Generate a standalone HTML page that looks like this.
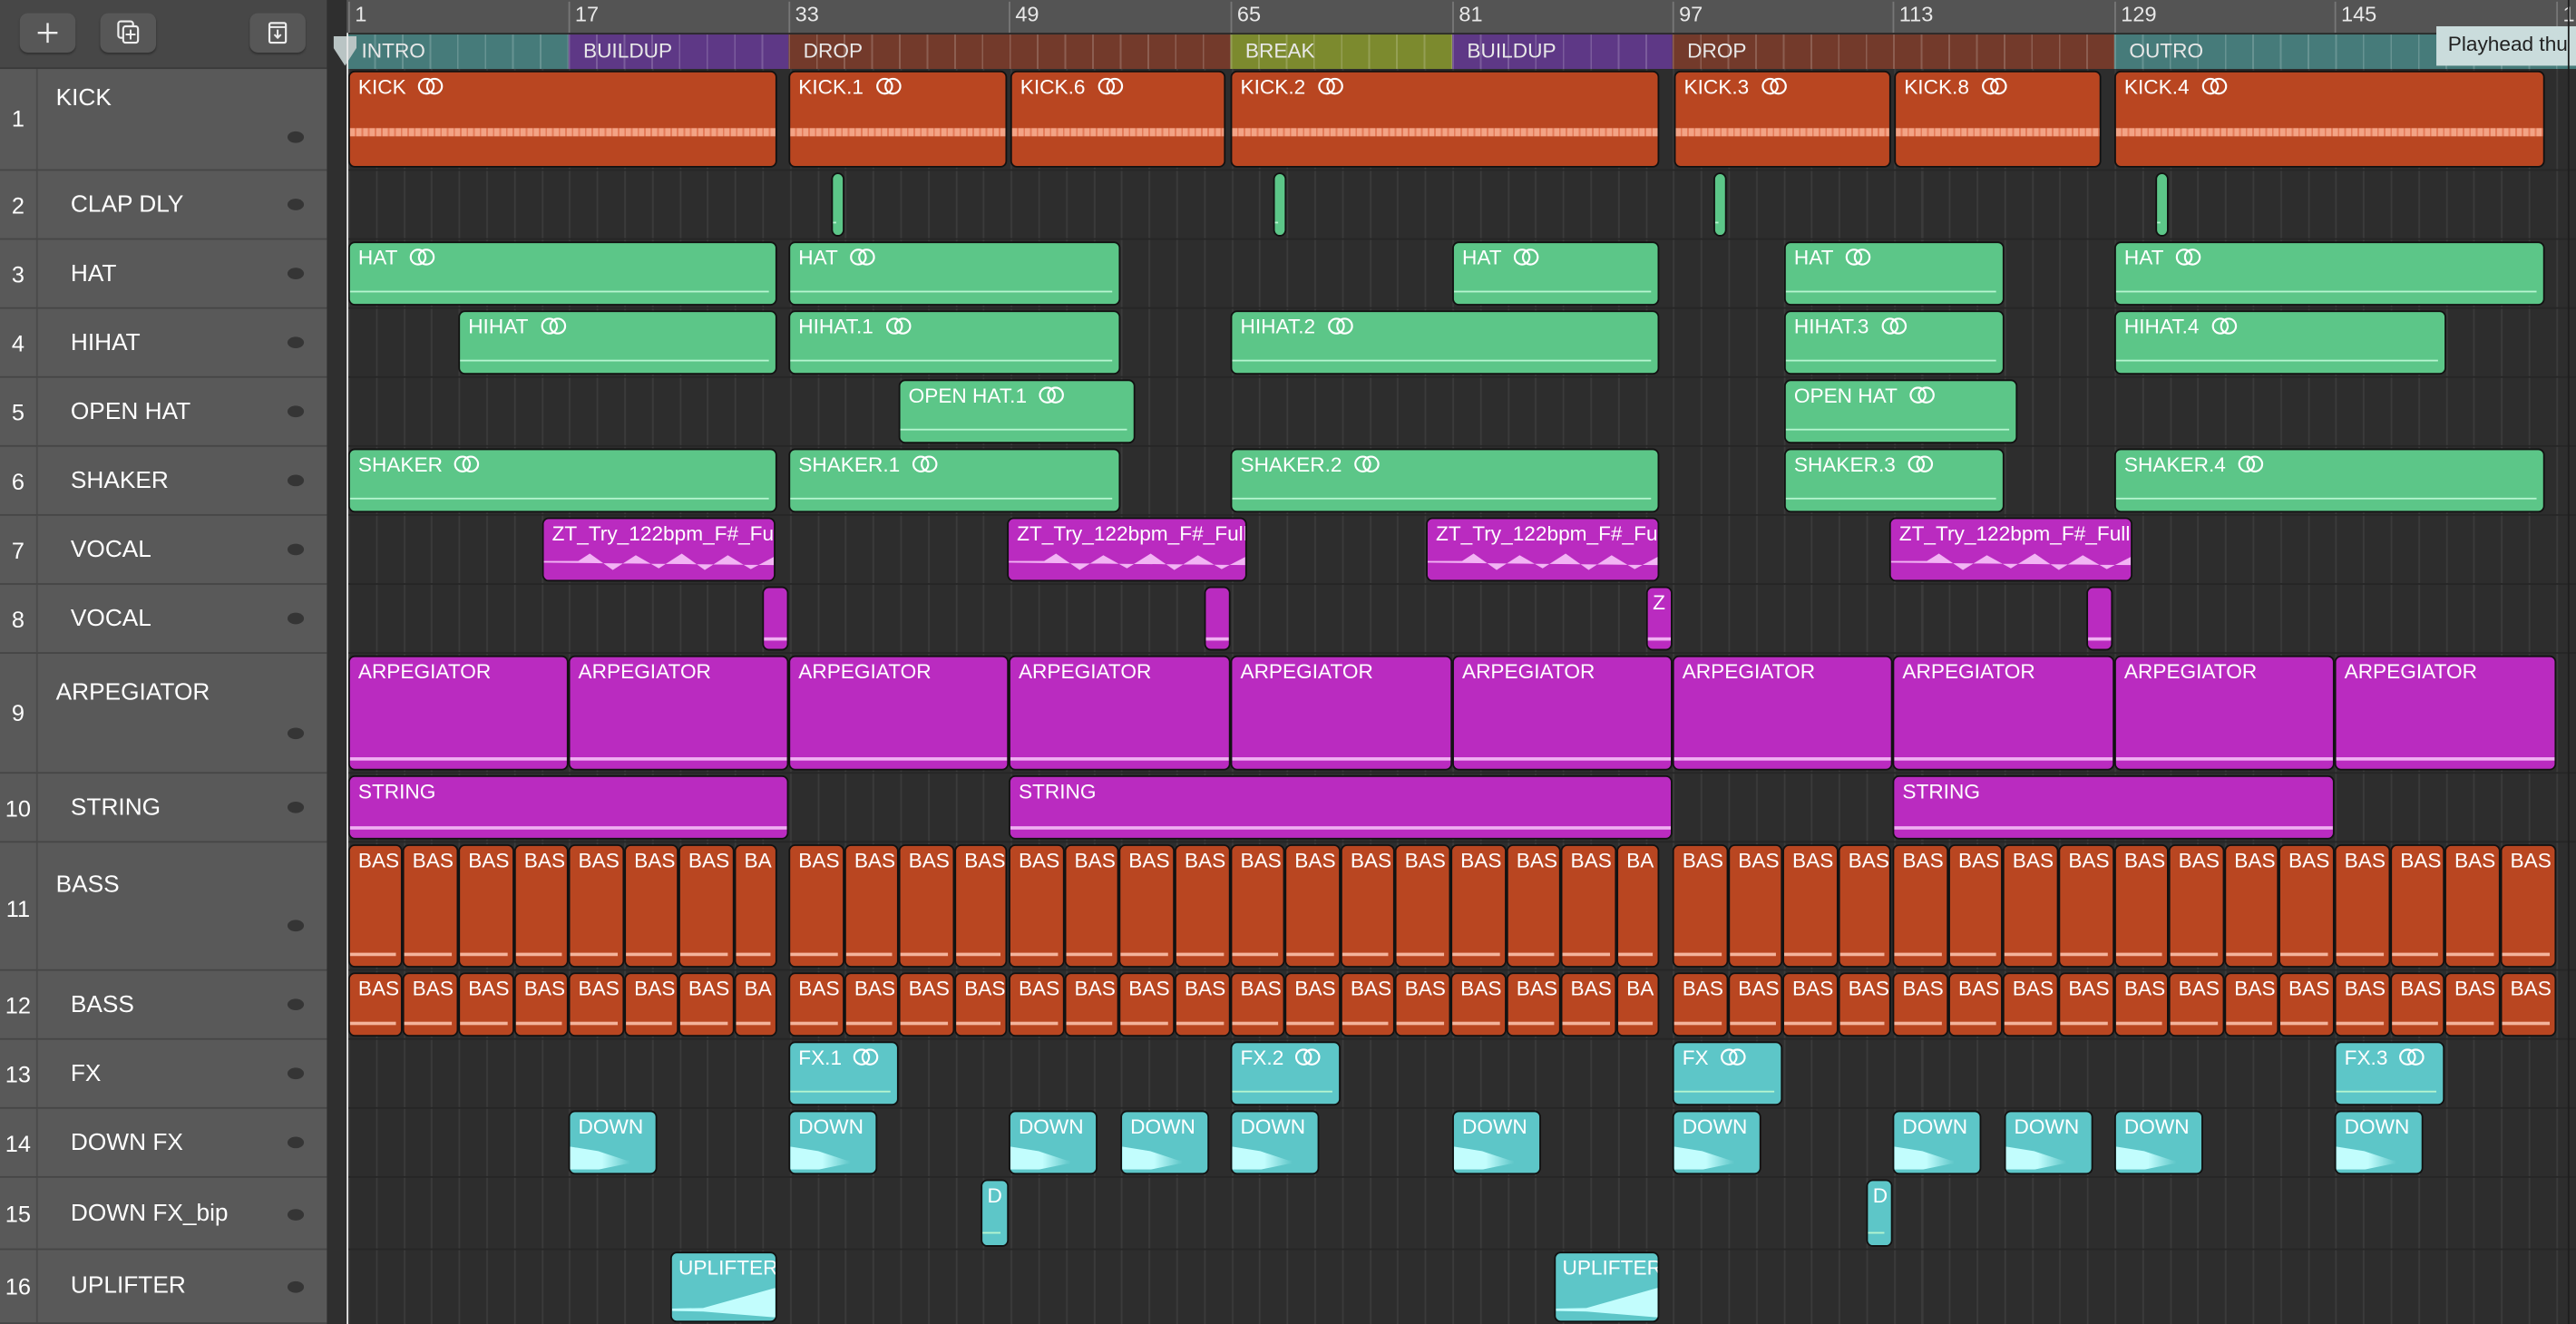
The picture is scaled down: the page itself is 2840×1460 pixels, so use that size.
<!DOCTYPE html>
<html><head><meta charset="utf-8"><style>
*{margin:0;padding:0;box-sizing:border-box}
html,body{width:2840px;height:1460px;overflow:hidden;background:#2d2d2d}
#s{position:absolute;left:0;top:0;width:1568px;height:806px;transform:scale(1.81122,1.81141);transform-origin:0 0;font-family:"Liberation Sans",sans-serif;background:#2d2d2d;overflow:hidden}
.hdr{position:absolute;left:0;top:0;width:199px;height:42px;background:#474747;border-bottom:1px solid #3a3a3a}
.btn{position:absolute;top:8px;height:24px;width:34px;background:#575757;border-radius:5px;box-shadow:0 1px 1px #333}
.panel{position:absolute;left:0;top:42px;width:199px;height:764px;background:#595959}
.strip{position:absolute;left:199px;top:0;width:12px;height:806px;background:#2f2f2f}
.tr{position:absolute;left:0;width:199px;border-bottom:1.5px solid #464646;color:#fff;font-size:14.5px}
.tr .n{position:absolute;left:0;width:23px;text-align:center;font-size:14px;border-right:1.5px solid #4a4a4a;height:100%}
.tr .nm{position:absolute;left:43px}
.tr .d{position:absolute;left:175px;width:10px;height:7px;border-radius:50%;background:#353535}
.arr{position:absolute;left:211px;top:42px;width:1357px;height:764px;background:#2d2d2d repeating-linear-gradient(90deg,#3b3b3b 0 1px,transparent 1px 16.8px);background-position:1px 0}
.ruler{position:absolute;left:211px;top:0;width:1357px;height:20px;background:#545454;color:#e8e8e8;font-size:13px}
.ruler span{position:absolute;top:1px;padding-left:3px;border-left:1px solid #777;height:19px}
.mk{position:absolute;top:20px;height:22px;color:#e8e8e8;font-size:12.5px;padding:3px 0 0 9px;border-top:1px solid #2a2a2a;background-image:repeating-linear-gradient(90deg,rgba(255,255,255,.18) 0 1px,transparent 1px 16.8px)}
.lane{position:absolute;left:0;width:1357px;border-bottom:1px solid #262626}
.r{position:absolute;top:1px;bottom:1px;border:1.2px solid #111;border-radius:4px;color:#fff;font-size:12.5px;padding:2px 0 0 5px;white-space:nowrap;overflow:hidden}
.o{background:#b94621}.g{background:#5cc688}.m{background:#ba2bc0}.c{background:#5dc6c8}
.o.k::after{content:"";position:absolute;left:0;right:0;top:60%;height:5px;background:repeating-linear-gradient(90deg,#f3a385 0 3px,#e57a58 3px 4px)}
.g::after,.c.l::after{content:"";position:absolute;left:0;right:4px;bottom:7px;height:1px;background:#b6f5d0}
.m.a::after{content:"";position:absolute;left:0;right:0;bottom:5px;height:2px;background:#f0b0f2}
.o.b::after{content:"";position:absolute;left:0;right:3px;bottom:6px;height:2px;background:#f4b49c}
.c.w::after{content:"";position:absolute;left:0;right:3px;bottom:2px;height:14px;background:linear-gradient(to right,#c2fdfd 0,#c2fdfd 40%,transparent 75%);clip-path:polygon(0 0,35% 20%,70% 60%,100% 62%,100% 72%,70% 75%,35% 100%,0 100%)}
.c.u::after{content:"";position:absolute;left:0;right:0;bottom:2px;height:18px;background:#c2fdfd;clip-path:polygon(0 70%,30% 68%,100% 0,100% 100%,30% 80%,0 78%)}
.m.v::after{content:"";position:absolute;left:0;right:0;bottom:6px;height:10px;background:#f2b4f4;clip-path:polygon(0 45%,15% 45%,20% 0,30% 100%,40% 10%,50% 90%,60% 0,70% 100%,80% 10%,90% 95%,100% 20%,100% 70%,0 55%)}
.lp{display:inline-block;vertical-align:-1px;margin-left:7px}
</style></head><body><div id="s">
<div class="hdr">
<div class="btn" style="left:12px"><svg width="34" height="24"><path d="M17 6v12M11 12h12" stroke="#eee" stroke-width="1.3"/></svg></div>
<div class="btn" style="left:61px"><svg width="34" height="24"><rect x="11" y="5" width="9" height="10" rx="1.5" fill="none" stroke="#eee" stroke-width="1.2"/><rect x="14" y="8" width="9" height="10" rx="1.5" fill="#575757" stroke="#eee" stroke-width="1.2"/><path d="M18.5 10v6M15.5 13h6" stroke="#eee" stroke-width="1.1"/></svg></div>
<div class="btn" style="left:152px"><svg width="34" height="24"><rect x="12" y="6" width="10" height="12" rx="1" fill="none" stroke="#eee" stroke-width="1.2"/><path d="M12 8.5h10M17 10v5M15 13l2 2 2-2" stroke="#eee" stroke-width="1.1" fill="none"/></svg></div>
</div>
<div class="panel"></div>
<div class="tr" style="top:42px;height:62px"><div class="n" style="padding-top:22px">1</div><div class="nm" style="left:34px;top:10px">KICK</div><div class="d" style="top:38px"></div></div>
<div class="tr" style="top:104px;height:42px"><div class="n" style="padding-top:13px">2</div><div class="nm" style="top:13px">CLAP DLY</div><div class="d" style="top:17px"></div></div>
<div class="tr" style="top:146px;height:42px"><div class="n" style="padding-top:13px">3</div><div class="nm" style="top:13px">HAT</div><div class="d" style="top:17px"></div></div>
<div class="tr" style="top:188px;height:42px"><div class="n" style="padding-top:13px">4</div><div class="nm" style="top:13px">HIHAT</div><div class="d" style="top:17px"></div></div>
<div class="tr" style="top:230px;height:42px"><div class="n" style="padding-top:13px">5</div><div class="nm" style="top:13px">OPEN HAT</div><div class="d" style="top:17px"></div></div>
<div class="tr" style="top:272px;height:42px"><div class="n" style="padding-top:13px">6</div><div class="nm" style="top:13px">SHAKER</div><div class="d" style="top:17px"></div></div>
<div class="tr" style="top:314px;height:42px"><div class="n" style="padding-top:13px">7</div><div class="nm" style="top:13px">VOCAL</div><div class="d" style="top:17px"></div></div>
<div class="tr" style="top:356px;height:42px"><div class="n" style="padding-top:13px">8</div><div class="nm" style="top:13px">VOCAL</div><div class="d" style="top:17px"></div></div>
<div class="tr" style="top:398px;height:73px"><div class="n" style="padding-top:28px">9</div><div class="nm" style="left:34px;top:16px">ARPEGIATOR</div><div class="d" style="top:45px"></div></div>
<div class="tr" style="top:471px;height:42px"><div class="n" style="padding-top:13px">10</div><div class="nm" style="top:13px">STRING</div><div class="d" style="top:17px"></div></div>
<div class="tr" style="top:513px;height:78px"><div class="n" style="padding-top:32px">11</div><div class="nm" style="left:34px;top:18px">BASS</div><div class="d" style="top:47px"></div></div>
<div class="tr" style="top:591px;height:42px"><div class="n" style="padding-top:13px">12</div><div class="nm" style="top:13px">BASS</div><div class="d" style="top:17px"></div></div>
<div class="tr" style="top:633px;height:42px"><div class="n" style="padding-top:13px">13</div><div class="nm" style="top:13px">FX</div><div class="d" style="top:17px"></div></div>
<div class="tr" style="top:675px;height:42px"><div class="n" style="padding-top:13px">14</div><div class="nm" style="top:13px">DOWN FX</div><div class="d" style="top:17px"></div></div>
<div class="tr" style="top:717px;height:44px"><div class="n" style="padding-top:14px">15</div><div class="nm" style="top:14px">DOWN FX_bip</div><div class="d" style="top:19px"></div></div>
<div class="tr" style="top:761px;height:45px"><div class="n" style="padding-top:14px">16</div><div class="nm" style="top:14px">UPLIFTER</div><div class="d" style="top:19px"></div></div>
<div class="strip"></div>
<div class="ruler"><span style="left:1px">1</span><span style="left:135px">17</span><span style="left:269px">33</span><span style="left:403px">49</span><span style="left:538px">65</span><span style="left:673px">81</span><span style="left:807px">97</span><span style="left:941px">113</span><span style="left:1076px">129</span><span style="left:1210px">145</span><span style="left:1345px">1</span></div>
<div class="mk" style="left:211px;width:135px;background-color:#467b7a">INTRO</div>
<div class="mk" style="left:346px;width:134px;background-color:#5e3886">BUILDUP</div>
<div class="mk" style="left:480px;width:269px;background-color:#733a2b">DROP</div>
<div class="mk" style="left:749px;width:135px;background-color:#7c8a2e">BREAK</div>
<div class="mk" style="left:884px;width:134px;background-color:#5e3886">BUILDUP</div>
<div class="mk" style="left:1018px;width:269px;background-color:#733a2b">DROP</div>
<div class="mk" style="left:1287px;width:281px;background-color:#467b7a">OUTRO</div>
<div style="position:absolute;left:1483px;top:16px;width:90px;height:24px;background:#cadcdc;color:#222;font-size:12.5px;padding:4px 0 0 7px;white-space:nowrap">Playhead thu</div>
<div style="position:absolute;left:203px;top:22px;width:14px;height:18px;background:#b9c4c4;clip-path:polygon(0 0,100% 0,100% 40%,50% 100%,0 40%)"></div>
<div class="arr">
<div class="lane" style="top:0;height:62px">
<div class="r o k" style="left:1px;width:261px">KICK<svg class="lp" width="16" height="11"><circle cx="5.5" cy="5.5" r="4.5" fill="none" stroke="#fff" stroke-width="1.2"/><circle cx="10.5" cy="5.5" r="4.5" fill="none" stroke="#fff" stroke-width="1.2"/></svg></div>
<div class="r o k" style="left:269px;width:133px">KICK.1<svg class="lp" width="16" height="11"><circle cx="5.5" cy="5.5" r="4.5" fill="none" stroke="#fff" stroke-width="1.2"/><circle cx="10.5" cy="5.5" r="4.5" fill="none" stroke="#fff" stroke-width="1.2"/></svg></div>
<div class="r o k" style="left:404px;width:131px">KICK.6<svg class="lp" width="16" height="11"><circle cx="5.5" cy="5.5" r="4.5" fill="none" stroke="#fff" stroke-width="1.2"/><circle cx="10.5" cy="5.5" r="4.5" fill="none" stroke="#fff" stroke-width="1.2"/></svg></div>
<div class="r o k" style="left:538px;width:261px">KICK.2<svg class="lp" width="16" height="11"><circle cx="5.5" cy="5.5" r="4.5" fill="none" stroke="#fff" stroke-width="1.2"/><circle cx="10.5" cy="5.5" r="4.5" fill="none" stroke="#fff" stroke-width="1.2"/></svg></div>
<div class="r o k" style="left:808px;width:132px">KICK.3<svg class="lp" width="16" height="11"><circle cx="5.5" cy="5.5" r="4.5" fill="none" stroke="#fff" stroke-width="1.2"/><circle cx="10.5" cy="5.5" r="4.5" fill="none" stroke="#fff" stroke-width="1.2"/></svg></div>
<div class="r o k" style="left:942px;width:126px">KICK.8<svg class="lp" width="16" height="11"><circle cx="5.5" cy="5.5" r="4.5" fill="none" stroke="#fff" stroke-width="1.2"/><circle cx="10.5" cy="5.5" r="4.5" fill="none" stroke="#fff" stroke-width="1.2"/></svg></div>
<div class="r o k" style="left:1076px;width:262px">KICK.4<svg class="lp" width="16" height="11"><circle cx="5.5" cy="5.5" r="4.5" fill="none" stroke="#fff" stroke-width="1.2"/><circle cx="10.5" cy="5.5" r="4.5" fill="none" stroke="#fff" stroke-width="1.2"/></svg></div>
</div>
<div class="lane" style="top:62px;height:42px">
<div class="r g" style="left:295px;width:8px;padding:0"></div><div class="r g" style="left:564px;width:8px;padding:0"></div><div class="r g" style="left:832px;width:8px;padding:0"></div><div class="r g" style="left:1101px;width:8px;padding:0"></div>
</div>
<div class="lane" style="top:104px;height:42px">
<div class="r g" style="left:1px;width:261px">HAT<svg class="lp" width="16" height="11"><circle cx="5.5" cy="5.5" r="4.5" fill="none" stroke="#fff" stroke-width="1.2"/><circle cx="10.5" cy="5.5" r="4.5" fill="none" stroke="#fff" stroke-width="1.2"/></svg></div>
<div class="r g" style="left:269px;width:202px">HAT<svg class="lp" width="16" height="11"><circle cx="5.5" cy="5.5" r="4.5" fill="none" stroke="#fff" stroke-width="1.2"/><circle cx="10.5" cy="5.5" r="4.5" fill="none" stroke="#fff" stroke-width="1.2"/></svg></div>
<div class="r g" style="left:673px;width:126px">HAT<svg class="lp" width="16" height="11"><circle cx="5.5" cy="5.5" r="4.5" fill="none" stroke="#fff" stroke-width="1.2"/><circle cx="10.5" cy="5.5" r="4.5" fill="none" stroke="#fff" stroke-width="1.2"/></svg></div>
<div class="r g" style="left:875px;width:134px">HAT<svg class="lp" width="16" height="11"><circle cx="5.5" cy="5.5" r="4.5" fill="none" stroke="#fff" stroke-width="1.2"/><circle cx="10.5" cy="5.5" r="4.5" fill="none" stroke="#fff" stroke-width="1.2"/></svg></div>
<div class="r g" style="left:1076px;width:262px">HAT<svg class="lp" width="16" height="11"><circle cx="5.5" cy="5.5" r="4.5" fill="none" stroke="#fff" stroke-width="1.2"/><circle cx="10.5" cy="5.5" r="4.5" fill="none" stroke="#fff" stroke-width="1.2"/></svg></div>
</div>
<div class="lane" style="top:146px;height:42px">
<div class="r g" style="left:68px;width:194px">HIHAT<svg class="lp" width="16" height="11"><circle cx="5.5" cy="5.5" r="4.5" fill="none" stroke="#fff" stroke-width="1.2"/><circle cx="10.5" cy="5.5" r="4.5" fill="none" stroke="#fff" stroke-width="1.2"/></svg></div>
<div class="r g" style="left:269px;width:202px">HIHAT.1<svg class="lp" width="16" height="11"><circle cx="5.5" cy="5.5" r="4.5" fill="none" stroke="#fff" stroke-width="1.2"/><circle cx="10.5" cy="5.5" r="4.5" fill="none" stroke="#fff" stroke-width="1.2"/></svg></div>
<div class="r g" style="left:538px;width:261px">HIHAT.2<svg class="lp" width="16" height="11"><circle cx="5.5" cy="5.5" r="4.5" fill="none" stroke="#fff" stroke-width="1.2"/><circle cx="10.5" cy="5.5" r="4.5" fill="none" stroke="#fff" stroke-width="1.2"/></svg></div>
<div class="r g" style="left:875px;width:134px">HIHAT.3<svg class="lp" width="16" height="11"><circle cx="5.5" cy="5.5" r="4.5" fill="none" stroke="#fff" stroke-width="1.2"/><circle cx="10.5" cy="5.5" r="4.5" fill="none" stroke="#fff" stroke-width="1.2"/></svg></div>
<div class="r g" style="left:1076px;width:202px">HIHAT.4<svg class="lp" width="16" height="11"><circle cx="5.5" cy="5.5" r="4.5" fill="none" stroke="#fff" stroke-width="1.2"/><circle cx="10.5" cy="5.5" r="4.5" fill="none" stroke="#fff" stroke-width="1.2"/></svg></div>
</div>
<div class="lane" style="top:188px;height:42px">
<div class="r g" style="left:336px;width:144px">OPEN HAT.1<svg class="lp" width="16" height="11"><circle cx="5.5" cy="5.5" r="4.5" fill="none" stroke="#fff" stroke-width="1.2"/><circle cx="10.5" cy="5.5" r="4.5" fill="none" stroke="#fff" stroke-width="1.2"/></svg></div>
<div class="r g" style="left:875px;width:142px">OPEN HAT<svg class="lp" width="16" height="11"><circle cx="5.5" cy="5.5" r="4.5" fill="none" stroke="#fff" stroke-width="1.2"/><circle cx="10.5" cy="5.5" r="4.5" fill="none" stroke="#fff" stroke-width="1.2"/></svg></div>
</div>
<div class="lane" style="top:230px;height:42px">
<div class="r g" style="left:1px;width:261px">SHAKER<svg class="lp" width="16" height="11"><circle cx="5.5" cy="5.5" r="4.5" fill="none" stroke="#fff" stroke-width="1.2"/><circle cx="10.5" cy="5.5" r="4.5" fill="none" stroke="#fff" stroke-width="1.2"/></svg></div>
<div class="r g" style="left:269px;width:202px">SHAKER.1<svg class="lp" width="16" height="11"><circle cx="5.5" cy="5.5" r="4.5" fill="none" stroke="#fff" stroke-width="1.2"/><circle cx="10.5" cy="5.5" r="4.5" fill="none" stroke="#fff" stroke-width="1.2"/></svg></div>
<div class="r g" style="left:538px;width:261px">SHAKER.2<svg class="lp" width="16" height="11"><circle cx="5.5" cy="5.5" r="4.5" fill="none" stroke="#fff" stroke-width="1.2"/><circle cx="10.5" cy="5.5" r="4.5" fill="none" stroke="#fff" stroke-width="1.2"/></svg></div>
<div class="r g" style="left:875px;width:134px">SHAKER.3<svg class="lp" width="16" height="11"><circle cx="5.5" cy="5.5" r="4.5" fill="none" stroke="#fff" stroke-width="1.2"/><circle cx="10.5" cy="5.5" r="4.5" fill="none" stroke="#fff" stroke-width="1.2"/></svg></div>
<div class="r g" style="left:1076px;width:262px">SHAKER.4<svg class="lp" width="16" height="11"><circle cx="5.5" cy="5.5" r="4.5" fill="none" stroke="#fff" stroke-width="1.2"/><circle cx="10.5" cy="5.5" r="4.5" fill="none" stroke="#fff" stroke-width="1.2"/></svg></div>
</div>
<div class="lane" style="top:272px;height:42px">
<div class="r m v" style="left:119px;width:142px">ZT_Try_122bpm_F#_Full</div>
<div class="r m v" style="left:402px;width:146px">ZT_Try_122bpm_F#_Full</div>
<div class="r m v" style="left:657px;width:142px">ZT_Try_122bpm_F#_Full</div>
<div class="r m v" style="left:939px;width:148px">ZT_Try_122bpm_F#_Full</div>
</div>
<div class="lane" style="top:314px;height:42px">
<div class="r m a" style="left:253px;width:16px;padding:0"></div>
<div class="r m a" style="left:522px;width:16px;padding:0"></div>
<div class="r m a" style="left:791px;width:16px;padding:2px 0 0 3px">Z</div>
<div class="r m a" style="left:1059px;width:16px;padding:0"></div>
</div>
<div class="lane" style="top:356px;height:73px">
<div class="r m a" style="left:1px;width:134px">ARPEGIATOR</div><div class="r m a" style="left:135px;width:134px">ARPEGIATOR</div><div class="r m a" style="left:269px;width:134px">ARPEGIATOR</div><div class="r m a" style="left:403px;width:135px">ARPEGIATOR</div><div class="r m a" style="left:538px;width:135px">ARPEGIATOR</div><div class="r m a" style="left:673px;width:134px">ARPEGIATOR</div><div class="r m a" style="left:807px;width:134px">ARPEGIATOR</div><div class="r m a" style="left:941px;width:135px">ARPEGIATOR</div><div class="r m a" style="left:1076px;width:134px">ARPEGIATOR</div><div class="r m a" style="left:1210px;width:135px">ARPEGIATOR</div>
</div>
<div class="lane" style="top:429px;height:42px">
<div class="r m a" style="left:1px;width:268px">STRING</div>
<div class="r m a" style="left:403px;width:404px">STRING</div>
<div class="r m a" style="left:941px;width:269px">STRING</div>
</div>
<div class="lane" style="top:471px;height:78px">
<div class="r o b" style="left:1px;width:33px">BAS</div><div class="r o b" style="left:34px;width:34px">BAS</div><div class="r o b" style="left:68px;width:34px">BAS</div><div class="r o b" style="left:102px;width:33px">BAS</div><div class="r o b" style="left:135px;width:34px">BAS</div><div class="r o b" style="left:169px;width:33px">BAS</div><div class="r o b" style="left:202px;width:34px">BAS</div><div class="r o b" style="left:236px;width:26px">BA</div>
<div class="r o b" style="left:269px;width:34px">BAS</div><div class="r o b" style="left:303px;width:33px">BAS</div><div class="r o b" style="left:336px;width:34px">BAS</div><div class="r o b" style="left:370px;width:32px">BAS</div>
<div class="r o b" style="left:403px;width:34px">BAS</div><div class="r o b" style="left:437px;width:33px">BAS</div><div class="r o b" style="left:470px;width:34px">BAS</div><div class="r o b" style="left:504px;width:34px">BAS</div><div class="r o b" style="left:538px;width:33px">BAS</div><div class="r o b" style="left:571px;width:34px">BAS</div><div class="r o b" style="left:605px;width:33px">BAS</div><div class="r o b" style="left:638px;width:34px">BAS</div><div class="r o b" style="left:672px;width:34px">BAS</div><div class="r o b" style="left:706px;width:33px">BAS</div><div class="r o b" style="left:739px;width:34px">BAS</div><div class="r o b" style="left:773px;width:26px">BA</div>
<div class="r o b" style="left:807px;width:34px">BAS</div><div class="r o b" style="left:841px;width:33px">BAS</div><div class="r o b" style="left:874px;width:34px">BAS</div><div class="r o b" style="left:908px;width:32px">BAS</div>
<div class="r o b" style="left:941px;width:34px">BAS</div><div class="r o b" style="left:975px;width:33px">BAS</div><div class="r o b" style="left:1008px;width:34px">BAS</div><div class="r o b" style="left:1042px;width:34px">BAS</div><div class="r o b" style="left:1076px;width:33px">BAS</div><div class="r o b" style="left:1109px;width:34px">BAS</div><div class="r o b" style="left:1143px;width:33px">BAS</div><div class="r o b" style="left:1176px;width:34px">BAS</div><div class="r o b" style="left:1210px;width:34px">BAS</div><div class="r o b" style="left:1244px;width:33px">BAS</div><div class="r o b" style="left:1277px;width:34px">BAS</div><div class="r o b" style="left:1311px;width:34px">BAS</div>
</div>
<div class="lane" style="top:549px;height:42px">
<div class="r o b" style="left:1px;width:33px">BAS</div><div class="r o b" style="left:34px;width:34px">BAS</div><div class="r o b" style="left:68px;width:34px">BAS</div><div class="r o b" style="left:102px;width:33px">BAS</div><div class="r o b" style="left:135px;width:34px">BAS</div><div class="r o b" style="left:169px;width:33px">BAS</div><div class="r o b" style="left:202px;width:34px">BAS</div><div class="r o b" style="left:236px;width:26px">BA</div>
<div class="r o b" style="left:269px;width:34px">BAS</div><div class="r o b" style="left:303px;width:33px">BAS</div><div class="r o b" style="left:336px;width:34px">BAS</div><div class="r o b" style="left:370px;width:32px">BAS</div>
<div class="r o b" style="left:403px;width:34px">BAS</div><div class="r o b" style="left:437px;width:33px">BAS</div><div class="r o b" style="left:470px;width:34px">BAS</div><div class="r o b" style="left:504px;width:34px">BAS</div><div class="r o b" style="left:538px;width:33px">BAS</div><div class="r o b" style="left:571px;width:34px">BAS</div><div class="r o b" style="left:605px;width:33px">BAS</div><div class="r o b" style="left:638px;width:34px">BAS</div><div class="r o b" style="left:672px;width:34px">BAS</div><div class="r o b" style="left:706px;width:33px">BAS</div><div class="r o b" style="left:739px;width:34px">BAS</div><div class="r o b" style="left:773px;width:26px">BA</div>
<div class="r o b" style="left:807px;width:34px">BAS</div><div class="r o b" style="left:841px;width:33px">BAS</div><div class="r o b" style="left:874px;width:34px">BAS</div><div class="r o b" style="left:908px;width:32px">BAS</div>
<div class="r o b" style="left:941px;width:34px">BAS</div><div class="r o b" style="left:975px;width:33px">BAS</div><div class="r o b" style="left:1008px;width:34px">BAS</div><div class="r o b" style="left:1042px;width:34px">BAS</div><div class="r o b" style="left:1076px;width:33px">BAS</div><div class="r o b" style="left:1109px;width:34px">BAS</div><div class="r o b" style="left:1143px;width:33px">BAS</div><div class="r o b" style="left:1176px;width:34px">BAS</div><div class="r o b" style="left:1210px;width:34px">BAS</div><div class="r o b" style="left:1244px;width:33px">BAS</div><div class="r o b" style="left:1277px;width:34px">BAS</div><div class="r o b" style="left:1311px;width:34px">BAS</div>
</div>
<div class="lane" style="top:591px;height:42px">
<div class="r c l" style="left:269px;width:67px">FX.1<svg class="lp" width="16" height="11"><circle cx="5.5" cy="5.5" r="4.5" fill="none" stroke="#fff" stroke-width="1.2"/><circle cx="10.5" cy="5.5" r="4.5" fill="none" stroke="#fff" stroke-width="1.2"/></svg></div>
<div class="r c l" style="left:538px;width:67px">FX.2<svg class="lp" width="16" height="11"><circle cx="5.5" cy="5.5" r="4.5" fill="none" stroke="#fff" stroke-width="1.2"/><circle cx="10.5" cy="5.5" r="4.5" fill="none" stroke="#fff" stroke-width="1.2"/></svg></div>
<div class="r c l" style="left:807px;width:67px">FX<svg class="lp" width="16" height="11"><circle cx="5.5" cy="5.5" r="4.5" fill="none" stroke="#fff" stroke-width="1.2"/><circle cx="10.5" cy="5.5" r="4.5" fill="none" stroke="#fff" stroke-width="1.2"/></svg></div>
<div class="r c l" style="left:1210px;width:67px">FX.3<svg class="lp" width="16" height="11"><circle cx="5.5" cy="5.5" r="4.5" fill="none" stroke="#fff" stroke-width="1.2"/><circle cx="10.5" cy="5.5" r="4.5" fill="none" stroke="#fff" stroke-width="1.2"/></svg></div>
</div>
<div class="lane" style="top:633px;height:42px">
<div class="r c w" style="left:135px;width:54px">DOWN</div><div class="r c w" style="left:269px;width:54px">DOWN</div><div class="r c w" style="left:403px;width:54px">DOWN</div><div class="r c w" style="left:471px;width:54px">DOWN</div><div class="r c w" style="left:538px;width:54px">DOWN</div><div class="r c w" style="left:673px;width:54px">DOWN</div><div class="r c w" style="left:807px;width:54px">DOWN</div><div class="r c w" style="left:941px;width:54px">DOWN</div><div class="r c w" style="left:1009px;width:54px">DOWN</div><div class="r c w" style="left:1076px;width:54px">DOWN</div><div class="r c w" style="left:1210px;width:54px">DOWN</div>
</div>
<div class="lane" style="top:675px;height:44px">
<div class="r c l" style="left:386px;width:17px;padding:2px 0 0 3px">D</div>
<div class="r c l" style="left:925px;width:16px;padding:2px 0 0 3px">D</div>
</div>
<div class="lane" style="top:719px;height:45px;border:0">
<div class="r c u" style="left:197px;width:65px;padding-left:4px">UPLIFTER</div>
<div class="r c u" style="left:735px;width:64px;padding-left:4px">UPLIFTER</div>
</div>
</div>
<div style="position:absolute;left:211px;top:20px;width:1px;height:786px;background:#e8e8e8"></div>
<div style="position:absolute;left:1563px;top:0;width:1px;height:806px;background:#1e1e1e"></div>
</div></body></html>
